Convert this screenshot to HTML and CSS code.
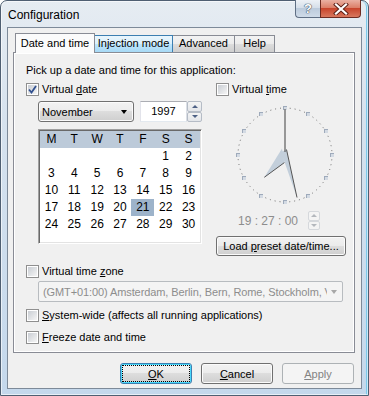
FILE: index.html
```html
<!DOCTYPE html>
<html lang="en">
<head>
  <meta charset="UTF-8" />
  <title>Configuration</title>
  <link rel="stylesheet" href="styles.css">
</head>
<body>
  <div class="window">
    <div class="titlebar">
      <span class="title">Configuration</span>
      <div class="caption">
        <div class="cap help">?</div>
        <div class="cap close">
          <svg width="16" height="12" viewBox="0 0 16 12">
            <path d="M3 1.5 L13 10.5 M13 1.5 L3 10.5" stroke="#5a1e14" stroke-width="4" stroke-linecap="square"/>
            <path d="M3 1.5 L13 10.5 M13 1.5 L3 10.5" stroke="#fff" stroke-width="2.2" stroke-linecap="square"/>
          </svg>
        </div>
      </div>
    </div>

    <div class="client">
      <div class="tabs">
        <div class="tab selected tab-date">Date and time</div>
        <div class="tab hot tab-injection">Injection mode</div>
        <div class="tab tab-advanced">Advanced</div>
        <div class="tab tab-help">Help</div>
      </div>

      <div class="panel">
        <p class="intro">Pick up a date and time for this application:</p>

        <div class="top">
          <div class="date-col">
            <div class="check">
              <span class="box checked">
                <svg width="9" height="9" viewBox="0 0 9 9"><path d="M1 4.5 L3.5 7.5 L8 1" fill="none" stroke="#31508f" stroke-width="1.8"/></svg>
              </span>
              <span>Virtual <u>d</u>ate</span>
            </div>

            <div class="date-controls">
              <div class="combo month">November<span class="arrow"></span></div>
              <div class="year">
                <span class="edit">1997</span>
                <span class="spin">
                  <span class="up"></span>
                  <span class="down"></span>
                </span>
              </div>
            </div>

            <div class="calendar">
              <div class="cal-head">
                <span>M</span><span>T</span><span>W</span><span>T</span><span>F</span><span>S</span><span>S</span>
              </div>
              <div class="cal-days">
                <span></span><span></span><span></span><span></span><span></span><span>1</span><span>2</span>
                <span>3</span><span>4</span><span>5</span><span>6</span><span>7</span><span>8</span><span>9</span>
                <span>10</span><span>11</span><span>12</span><span>13</span><span>14</span><span>15</span><span>16</span>
                <span>17</span><span>18</span><span>19</span><span>20</span><span class="today">21</span><span>22</span><span>23</span>
                <span>24</span><span>25</span><span>26</span><span>27</span><span>28</span><span>29</span><span>30</span>
              </div>
            </div>
          </div>

          <div class="time-col">
            <div class="check">
              <span class="box"></span>
              <span>Virtual <u>t</u>ime</span>
            </div>

            <svg class="clock" width="104" height="104" viewBox="0 0 104 104">
              <circle cx="52" cy="52" r="47" fill="none" stroke="#6a6a6a" stroke-width="1" stroke-dasharray="1 3.9218" stroke-dashoffset="0.5"/>
              <g fill="#9eaabb">
                <rect x="50" y="3" width="4" height="4"/>
                <rect x="73" y="9" width="4" height="4"/>
                <rect x="91" y="26" width="4" height="4"/>
                <rect x="97" y="50" width="4" height="4"/>
                <rect x="91" y="73" width="4" height="4"/>
                <rect x="73" y="91" width="4" height="4"/>
                <rect x="50" y="97" width="4" height="4"/>
                <rect x="26" y="91" width="4" height="4"/>
                <rect x="9" y="73" width="4" height="4"/>
                <rect x="3" y="50" width="4" height="4"/>
                <rect x="9" y="26" width="4" height="4"/>
                <rect x="26" y="9" width="4" height="4"/>
              </g>
              <g fill="#d3dae3">
                <rect x="51" y="4" width="3" height="3"/>
                <rect x="74" y="10" width="3" height="3"/>
                <rect x="92" y="27" width="3" height="3"/>
                <rect x="98" y="51" width="3" height="3"/>
                <rect x="92" y="74" width="3" height="3"/>
                <rect x="74" y="92" width="3" height="3"/>
                <rect x="51" y="98" width="3" height="3"/>
                <rect x="27" y="92" width="3" height="3"/>
                <rect x="10" y="74" width="3" height="3"/>
                <rect x="4" y="51" width="3" height="3"/>
                <rect x="10" y="27" width="3" height="3"/>
                <rect x="27" y="10" width="3" height="3"/>
              </g>
              <!-- hour hand -->
              <polygon points="31.3,74.3 51.5,59.5 49,45.5" fill="#c3cfdb"/>
              <line x1="31.3" y1="74.3" x2="51.5" y2="59.5" stroke="#555" stroke-width="1"/>
              <!-- minute hand -->
              <polygon points="64,94.5 53.5,46.5 48,49" fill="#c3cfdb"/>
              <line x1="53.5" y1="46.5" x2="64" y2="94.5" stroke="#555" stroke-width="1"/>
              <!-- second hand -->
              <line x1="52" y1="6" x2="52" y2="49" stroke="#5c5c5c" stroke-width="1.2"/>
            </svg>

            <div class="time-row">
              <span class="time">19 : 27 : 00</span>
              <span class="spin small disabled">
                <span class="up"></span>
                <span class="down"></span>
              </span>
            </div>

            <button class="btn preset">Load <u>p</u>reset date/time...</button>
          </div>
        </div>

        <div class="check zone">
          <span class="box"></span>
          <span>Virtual time <u>z</u>one</span>
        </div>
        <div class="combo wide disabled">
          <span class="combo-text">(GMT+01:00) Amsterdam, Berlin, Bern, Rome, Stockholm, Vienna</span>
          <span class="arrow"></span>
        </div>
        <div class="check system">
          <span class="box"></span>
          <span><u>S</u>ystem-wide (affects all running applications)</span>
        </div>
        <div class="check freeze">
          <span class="box"></span>
          <span><u>F</u>reeze date and time</span>
        </div>
      </div>

      <div class="actions">
        <button class="btn default"><span class="focus"><u>O</u>K</span></button>
        <button class="btn"><u>C</u>ancel</button>
        <button class="btn" disabled><u>A</u>pply</button>
      </div>
    </div>
  </div>
</body>
</html>
```

FILE: styles.css
```css
body {
  margin: 0;
  background: #fff;
  font-family: "Liberation Sans", Arial, sans-serif;
  font-size: 11px;
  color: #000;
}

.window {
  width: 369px;
  height: 396px;
  box-sizing: border-box;
  display: flex;
  flex-direction: column;
  padding: 0 6px 6px;
  border: 1px solid #4f5f72;
  border-radius: 7px 7px 0 0;
  background: linear-gradient(#e6ecf2, #d6e2ee 30%, #c4d8ec);
  box-shadow: inset 0 0 0 1px rgba(255, 255, 255, 0.6), inset -2px 0 0 #7cc8ea;
}

.titlebar {
  height: 26px;
  display: flex;
  align-items: flex-start;
}

.title {
  font-size: 12px;
  line-height: 14px;
  padding: 7px 0 0 1px;
}

.caption {
  display: flex;
  margin: -1px 1px 0 auto;
}

.cap {
  height: 18px;
  box-sizing: border-box;
  display: flex;
  align-items: center;
  justify-content: center;
}

.help {
  width: 25px;
  border: 1px solid #5f6f84;
  border-top: none;
  border-right: none;
  border-radius: 0 0 0 4px;
  background: linear-gradient(#edf1f6, #d3dde8 50%, #bccbdc 50%, #cfdbe8);
  color: #fff;
  font-weight: bold;
  font-size: 13px;
  text-shadow: 0 0 1px #3c4c60, 0 0 1px #3c4c60, 0 0 1px #3c4c60;
}

.close {
  width: 41px;
  border: 1px solid #6e2c22;
  border-top: none;
  border-radius: 0 0 4px 0;
  background: linear-gradient(#eab1a3, #da7a62 50%, #c8452c 50%, #d8785e);
}

.client {
  flex: 1;
  display: flex;
  flex-direction: column;
  padding: 5px 0 0;
  border: 1px solid #7d8a99;
  background: #f0f0f0;
}

/* tabs */

.tabs {
  display: flex;
  align-items: flex-end;
  height: 19px;
  margin-left: 7px;
}

.tab {
  height: 17px;
  box-sizing: border-box;
  line-height: 15px;
  text-align: center;
  border: 1px solid #898c95;
  border-bottom: none;
  border-left: none;
  background: linear-gradient(#f3f3f3, #ebebeb 50%, #dddddd 50%, #cfcfcf);
}

.tab.selected {
  height: 20px;
  margin-bottom: -1px;
  line-height: 19px;
  border-left: 1px solid #898c95;
  background: #fbfbfb;
  position: relative;
  z-index: 1;
}

.tab.hot {
  border-color: #3c7fb1;
  background: linear-gradient(#eaf6fd, #d9f0fc 50%, #bee6fd 50%, #a7d9f5);
}

.tab-date {
  width: 80px;
}

.tab-injection {
  width: 78px;
}

.tab-advanced {
  width: 62px;
}

.tab-help {
  width: 40px;
}

.panel {
  height: 301px;
  box-sizing: border-box;
  margin: 0 6px 0 5px;
  padding: 10px 12px 0;
  border: 1px solid #898c95;
  box-shadow: inset 0 0 0 1px #fff;
  background: #f0f0f0;
}

.intro {
  margin: 0;
  line-height: 15px;
}

.top {
  display: flex;
  margin-top: 4px;
}

.date-col {
  width: 176px;
}

.time-col {
  width: 130px;
  margin-left: 14px;
}

/* check boxes */

.check {
  display: flex;
  align-items: center;
  gap: 3px;
  height: 15px;
  line-height: 15px;
}

.box {
  width: 13px;
  height: 13px;
  box-sizing: border-box;
  padding: 1px;
  border: 1px solid #8f8f8f;
  background: linear-gradient(135deg, #c9cdd3, #f5f5f5) content-box, #fff;
  display: flex;
  align-items: center;
  justify-content: center;
}

.zone {
  margin-top: 8px;
}

.system {
  margin-top: 6px;
}

.freeze {
  margin-top: 7px;
}

/* date controls */

.date-controls {
  display: flex;
  margin: 4px 0 0 12px;
}

.combo {
  height: 21px;
  box-sizing: border-box;
  display: flex;
  align-items: center;
  padding-left: 3px;
  border: 1px solid #707070;
  border-radius: 3px;
  background: linear-gradient(#f2f2f2, #ebebeb 50%, #dddddd 50%, #cfcfcf);
  box-shadow: inset 0 0 0 1px #fbfbfb;
}

.month {
  width: 96px;
}

.arrow {
  margin: 0 6px 0 auto;
  border-left: 3.5px solid transparent;
  border-right: 3.5px solid transparent;
  border-top: 4px solid #000;
}

.year {
  display: flex;
  margin-left: 6px;
}

.edit {
  width: 47px;
  height: 21px;
  box-sizing: border-box;
  line-height: 19px;
  text-align: center;
  border: 1px solid #abadb3;
  border-color: #abadb3 #dbdfe6 #e3e9ef #e2e3ea;
  background: #fff;
}

.spin {
  width: 15px;
  height: 21px;
  display: flex;
  flex-direction: column;
}

.spin .up,
.spin .down {
  flex: 1;
  display: flex;
  align-items: center;
  justify-content: center;
  border: 1px solid #b5bcc6;
  border-radius: 2px;
  background: linear-gradient(#f4f4f4, #e3e6ea);
}

.spin .up::after {
  content: "";
  border-left: 3px solid transparent;
  border-right: 3px solid transparent;
  border-bottom: 3px solid #4d6185;
}

.spin .down::after {
  content: "";
  border-left: 3px solid transparent;
  border-right: 3px solid transparent;
  border-top: 3px solid #4d6185;
}

.spin.small {
  width: 12px;
  height: 19px;
}

.spin.disabled .up,
.spin.disabled .down {
  border-color: #d5d8dc;
  background: #f4f4f4;
}

.spin.disabled .up::after {
  border-bottom-color: #b4b8bd;
}

.spin.disabled .down::after {
  border-top-color: #b4b8bd;
}

/* calendar */

.calendar {
  width: 164px;
  height: 115px;
  box-sizing: border-box;
  margin: 7px 0 0 12px;
  border: 1px solid;
  border-color: #a0a0a0 #fff #fff #a0a0a0;
  box-shadow: inset 1px 1px 0 #696969, inset -1px -1px 0 #e3e3e3;
  background: #fff;
  padding: 1px;
  font-size: 12px;
}

.cal-head,
.cal-days {
  display: grid;
  grid-template-columns: repeat(7, 1fr);
}

.cal-head {
  background: #bccad9;
}

.cal-head span,
.cal-days span {
  height: 17px;
  line-height: 17px;
  text-align: center;
}

.cal-days .today {
  background: #9db3ca;
}

/* time */

.clock {
  display: block;
  margin: 6px 0 0 17px;
}

.time-row {
  display: flex;
  align-items: center;
  margin-top: 4px;
  height: 19px;
}

.time {
  width: 70px;
  margin-left: 22px;
  color: #8d8d8d;
  font-size: 12px;
}

/* buttons */

.btn {
  height: 21px;
  padding: 0;
  font: inherit;
  color: #000;
  border: 1px solid #707070;
  border-radius: 3px;
  background: linear-gradient(#f2f2f2, #ebebeb 50%, #dddddd 50%, #cfcfcf);
  box-shadow: inset 0 0 0 1px #fbfbfb;
}

.preset {
  display: block;
  width: 130px;
  height: 20px;
  margin-top: 6px;
}

.wide {
  width: 305px;
  margin: 2px 0 0 12px;
  padding-left: 4px;
  border-color: #b8bcc0;
  border-radius: 2px;
  background: #f4f4f4;
  box-shadow: none;
  color: #8d8d8d;
}

.combo-text {
  flex: 1;
  overflow: hidden;
  white-space: nowrap;
  letter-spacing: -0.1px;
}

.wide .arrow {
  margin: 0 5px 0 4px;
  border-top-color: #a8a8a8;
}

.actions {
  display: flex;
  justify-content: flex-end;
  gap: 9px;
  margin-top: 10px;
  padding-right: 7px;
}

.actions .btn {
  width: 72px;
}

.btn.default {
  border-color: #3c7fb1;
  box-shadow: inset 0 0 0 1px #48d8fb;
  padding: 2px;
}

.focus {
  display: flex;
  align-items: center;
  justify-content: center;
  height: 100%;
  outline: 1px dotted #000;
}

.btn:disabled {
  color: #838383;
  border-color: #adb2b5;
  background: #f4f4f4;
  box-shadow: none;
}
```
